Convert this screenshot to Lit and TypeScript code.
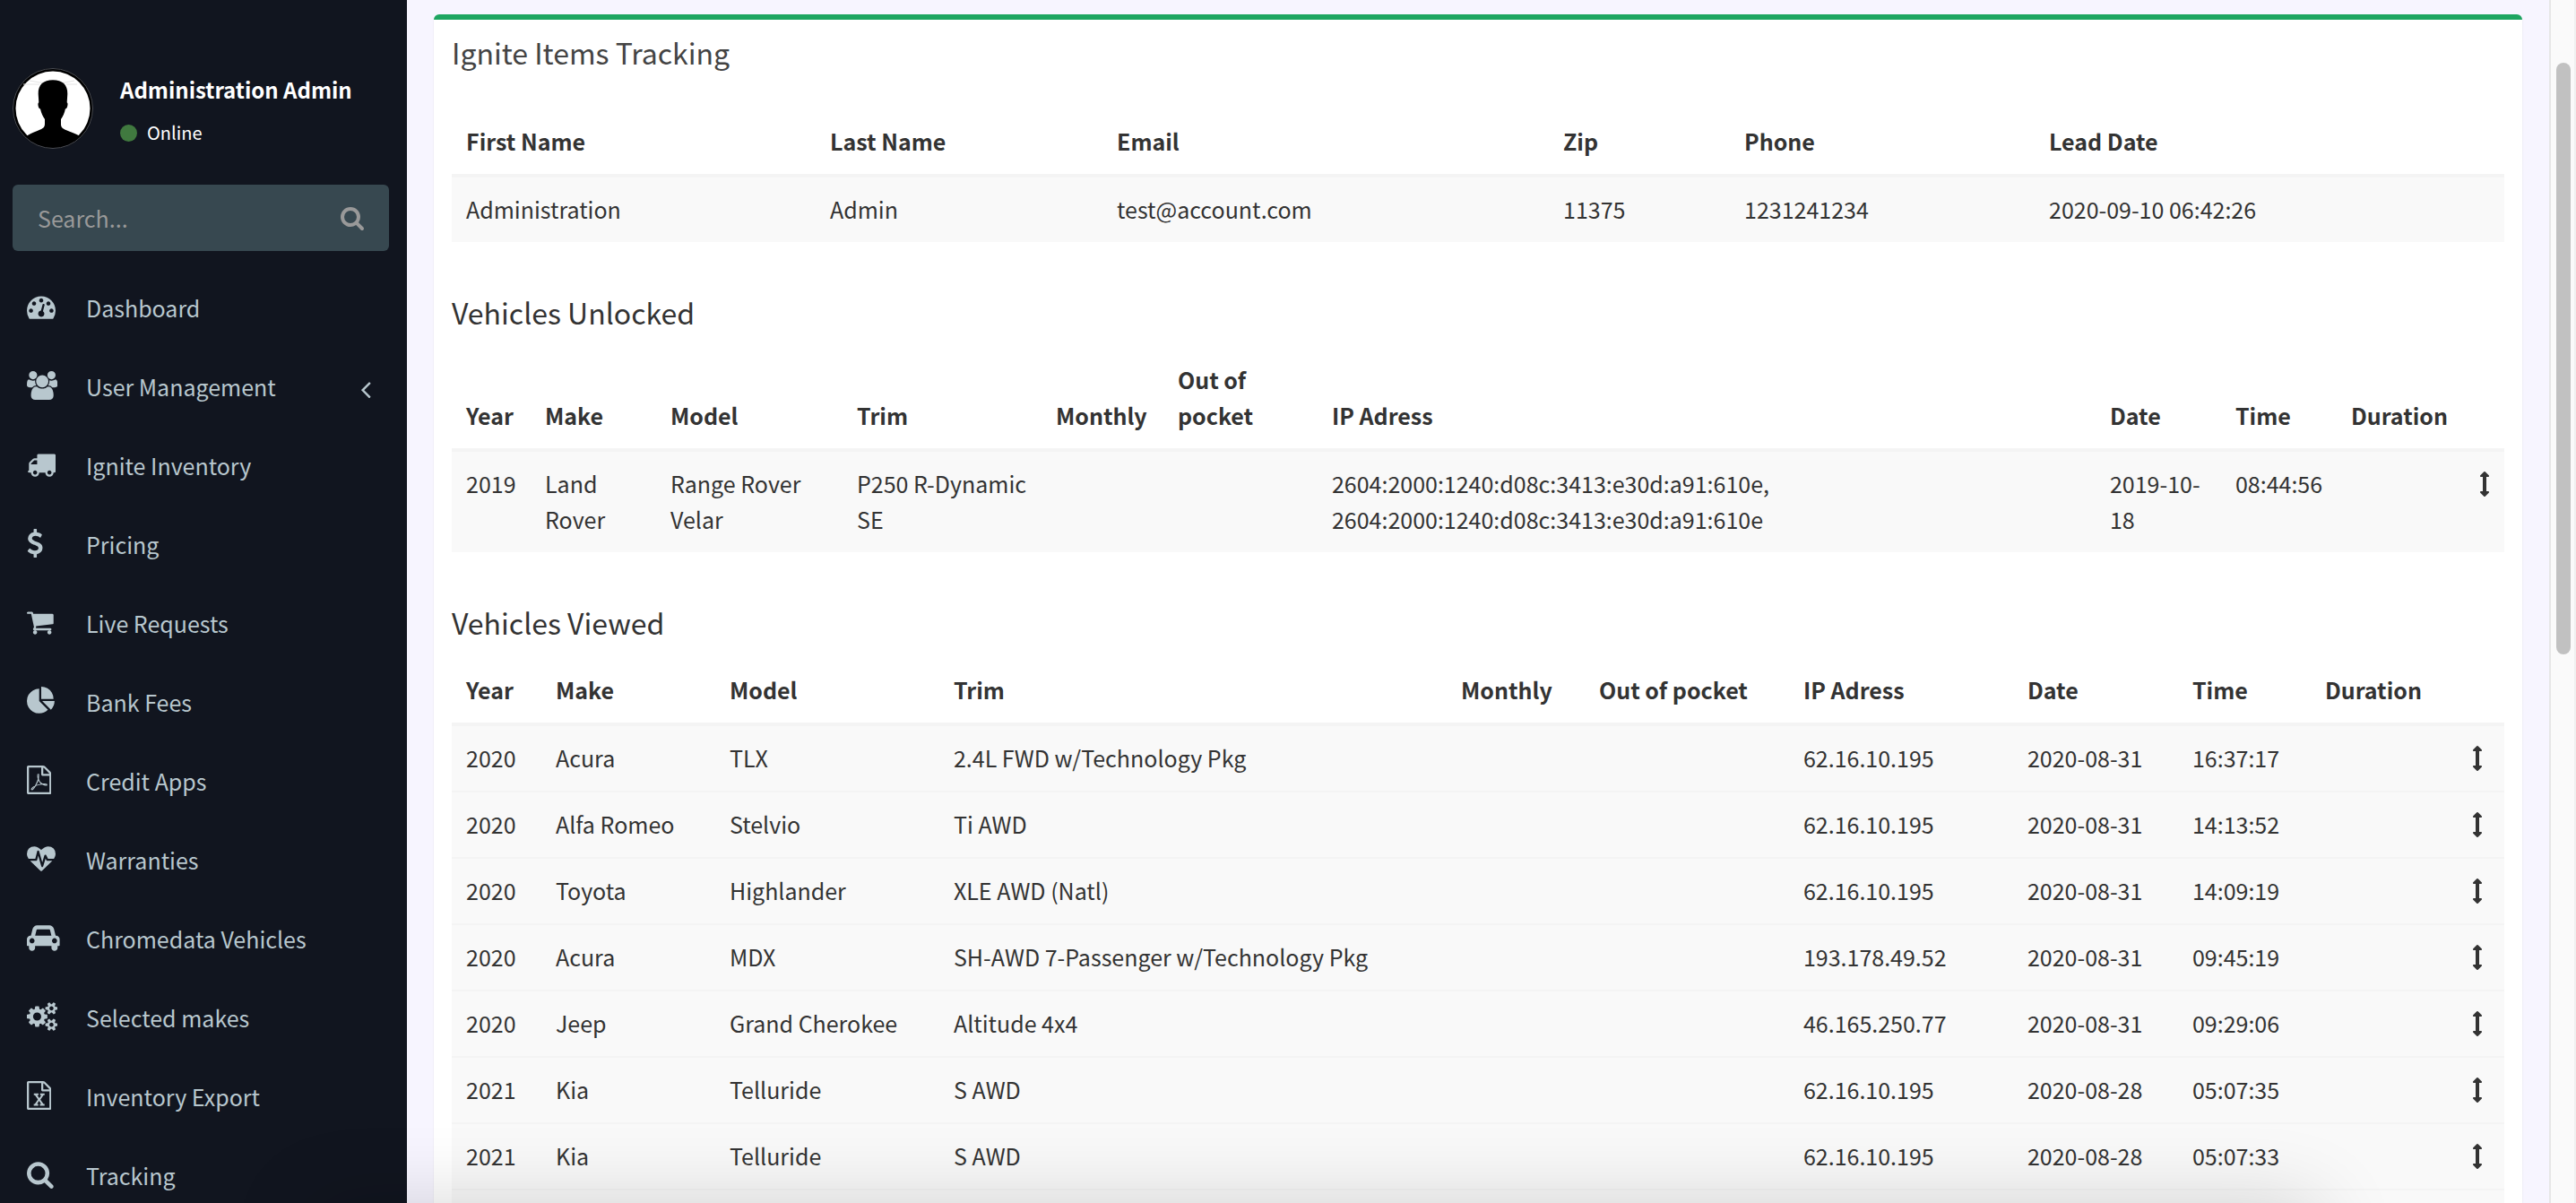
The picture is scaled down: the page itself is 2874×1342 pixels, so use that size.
import { LitElement, html, svg, css, nothing } from "lit";
import { customElement, property } from "lit/decorators.js";

/* Glyph outlines, drawn on a grid of 1792 units to the em. */
interface Glyph {
  box: string;
  d: string;
}

const FILE =
  "M1596 380q28 28 48 76t20 88v1152q0 40-28 68t-68 28h-1344q-40 0-68-28t-28-68v-1600q0-40 28-68t68-28h896q40 0 88 20t76 48zm-444-244v376h376q-10-29-22-41l-313-313q-12-12-41-22zm384 1528v-1024h-416q-40 0-68-28t-28-68v-416h-768v1536h1280z";

const SMALL_COG =
  "v140q0 16-149 31-12 27-30 52 51 113 51 138 0 4-4 7-122 71-124 71-8 0-46-47t-52-68q-20 2-30 2t-30-2q-14 21-52 68t-46 47q-2 0-124-71-4-3-4-7 0-25 51-138-18-25-30-52-149-15-149-31v-140q0-16 149-31 13-29 30-52-51-113-51-138 0-4 4-7 4-2 35-20t59-34 30-16q8 0 46 46.5t52 67.5q20-2 30-2t30 2q51-71 92-112l6-2q4 0 124 70 4 3 4 7 0 25-51 138 17 23 30 52 149 15 149 31z";

const GLYPHS: Record<string, Glyph> = {
  dashboard: {
    box: "0 0 1792 1792",
    d: "M384 1152q0-53-37.5-90.5t-90.5-37.5-90.5 37.5-37.5 90.5 37.5 90.5 90.5 37.5 90.5-37.5 37.5-90.5zm192-448q0-53-37.5-90.5t-90.5-37.5-90.5 37.5-37.5 90.5 37.5 90.5 90.5 37.5 90.5-37.5 37.5-90.5zm428 481l101-382q6-26-7.5-48.5t-38.5-29.5-48 6.5-30 39.5l-101 382q-60 5-107 43.5t-63 98.5q-20 77 20 146t117 89 146-20 89-117q16-60-6-117t-72-91zm660-33q0-53-37.5-90.5t-90.5-37.5-90.5 37.5-37.5 90.5 37.5 90.5 90.5 37.5 90.5-37.5 37.5-90.5zm-640-640q0-53-37.5-90.5t-90.5-37.5-90.5 37.5-37.5 90.5 37.5 90.5 90.5 37.5 90.5-37.5 37.5-90.5zm448 192q0-53-37.5-90.5t-90.5-37.5-90.5 37.5-37.5 90.5 37.5 90.5 90.5 37.5 90.5-37.5 37.5-90.5zm320 448q0 261-141 483-19 29-54 29h-1402q-35 0-54-29-141-221-141-483 0-182 71-348t191-286 286-191 348-71 348 71 286 191 191 286 71 348z",
  },
  users: {
    box: "64 0 1920 1792",
    d: "M657 896q-162 5-265 128h-134q-82 0-138-40.5t-56-118.5q0-353 124-353 6 0 43.5 21t97.5 42.5 119 21.5q67 0 133-23-5 37-5 66 0 139 81 256zm1071 637q0 120-73 189.5t-194 69.5h-874q-121 0-194-69.5t-73-189.5q0-53 3.5-103.5t14-109 26.5-108.5 43-97.5 62-81 85.5-53.5 111.5-20q10 0 43 21.5t73 48 107 48 135 21.5 135-21.5 107-48 73-48 43-21.5q61 0 111.5 20t85.5 53.5 62 81 43 97.5 26.5 108.5 14 109 3.5 103.5zm-1024-1277q0 106-75 181t-181 75-181-75-75-181 75-181 181-75 181 75 75 181zm704 384q0 159-112.5 271.5t-271.5 112.5-271.5-112.5-112.5-271.5 112.5-271.5 271.5-112.5 271.5 112.5 112.5 271.5zm576 225q0 78-56 118.5t-138 40.5h-134q-103-123-265-128 81-117 81-256 0-29-5-66 66 23 133 23 59 0 119-21.5t97.5-42.5 43.5-21q124 0 124 353zm-128-609q0 106-75 181t-181 75-181-75-75-181 75-181 181-75 181 75 75 181z",
  },
  truck: {
    box: "0 0 1792 1792",
    d: "M640 1408q0-52-38-90t-90-38-90 38-38 90 38 90 90 38 90-38 38-90zm-384-512h384v-256h-158q-13 0-22 9l-195 195q-9 9-9 22v30zm1280 512q0-52-38-90t-90-38-90 38-38 90 38 90 90 38 90-38 38-90zm256-1088v1024q0 15-4 26.5t-13.5 18.5-16.5 11.5-23.5 6-22.5 2-25.5 0-22.5-.5q0 106-75 181t-181 75-181-75-75-181h-384q0 106-75 181t-181 75-181-75-75-181h-64q-3 0-22.5.5t-25.5 0-22.5-2-23.5-6-16.5-11.5-13.5-18.5-4-26.5q0-26 19-45t45-19v-320q0-8-.5-35t0-38 2.5-34.5 6.5-37 14-30.5 22.5-30l198-198q19-19 50.5-32t58.5-13h160v-192q0-26 19-45t45-19h1024q26 0 45 19t19 45z",
  },
  dollar: {
    box: "384 0 1024 1792",
    d: "M1362 1185q0 153-99.5 263.5t-258.5 136.5v175q0 14-9 23t-23 9h-135q-13 0-22.5-9.5t-9.5-22.5v-175q-66-9-127.5-31t-101.5-44.5-74-48-46.5-37.5-17.5-18q-17-21-2-41l103-135q7-10 23-12 15-2 24 9l2 2q113 99 243 125 37 8 74 8 81 0 142.5-43t61.5-122q0-28-15-53t-33.5-42-58.5-37.5-66-32-80-32.5q-39-16-61.5-25t-61.5-26.5-62.5-31-56.5-35.5-53.5-42.5-43.5-49-35.5-58-21-66.5-8.5-78q0-138 98-242t255-134v-180q0-13 9.5-22.5t22.5-9.5h135q14 0 23 9t9 23v176q57 6 110.5 23t87 33.5 63.5 37.5 39 29 15 14q17 18 5 38l-81 146q-8 15-23 16-14 3-27-7-3-3-14.5-12t-39-26.5-58.5-32-74.5-26-85.5-11.5q-95 0-155 43t-60 111q0 26 8.5 48t29.5 41.5 39.5 33 56 31 60.5 27 70 27.5q53 20 81 31.5t76 35 75.5 42.5 62 50 53 63.5 31.5 76.5 13 94z",
  },
  cart: {
    box: "64 0 1664 1792",
    d: "M704 1536q0 52-38 90t-90 38-90-38-38-90 38-90 90-38 90 38 38 90zm896 0q0 52-38 90t-90 38-90-38-38-90 38-90 90-38 90 38 38 90zm128-1088v512q0 24-16.5 42.5t-40.5 21.5l-1044 122q13 60 13 70 0 16-24 64h920q26 0 45 19t19 45-19 45-45 19h-1024q-26 0-45-19t-19-45q0-11 8-31.5t16-36 21.5-40 15.5-29.5l-177-823h-204q-26 0-45-19t-19-45 19-45 45-19h256q16 0 28.5 6.5t19.5 15.5 13 24.5 8 26 5.5 29.5 4.5 26h1201q26 0 45 19t19 45z",
  },
  pie: {
    box: "0 0 1792 1792",
    d: "M768 890l546 546q-106 108-247.5 168t-298.5 60q-209 0-385.5-103t-279.5-279.5-103-385.5 103-385.5 279.5-279.5 385.5-103v762zm187 6h773q0 157-60 298.5t-168 247.5zm709-128h-768v-768q209 0 385.5 103t279.5 279.5 103 385.5z",
  },
  pdf: {
    box: "128 0 1536 1792",
    d:
      FILE +
      "m-514-593q33 26 84 56 59-7 117-7 147 0 177 49 16 22 2 52 0 1-1 2l-2 2v1q-6 38-71 38-48 0-115-20t-130-53q-221 24-392 83-153 262-242 262-15 0-28-7l-24-12q-1-1-6-5-10-10-6-36 9-40 56-91.5t132-96.5q14-9 23 6 2 2 2 4 52-85 107-197 68-136 104-262-24-82-30.5-159.5t6.5-127.5q11-40 42-40h22q23 0 35 15 18 21 9 68-2 6-4 8 1 3 1 8v30q-2 123-14 192 55 164 146 238zm-576 411q52-24 137-158-51 40-87.5 84t-49.5 74zm398-920q-15 42-2 132 1-7 7-44 0-3 7-43 1-4 4-8-1-1-1-2-1-2-1-3-1-22-13-36 0 1-1 2v2zm-124 661q135-54 284-81-2-1-13-9.5t-16-13.5q-76-67-127-176-27 86-83 197-30 56-45 83zm646-16q-24-24-140-24 76 28 124 28 14 0 18-1 0-1-2-3z",
  },
  heartbeat: {
    box: "0 0 1792 1792",
    d: "M1280 1024h305q-5 6-10 10.5t-9 7.5l-3 4-623 600q-18 18-44 18t-44-18l-624-602q-5-2-21-20h369q22 0 39.5-13.5t22.5-34.5l70-281 190 667q6 20 23 33t39 13q21 0 38-13t23-33l146-485 56 112q18 35 57 35zm512-428q0 145-103 300h-369l-111-221q-8-17-25.5-27t-36.5-8q-45 5-56 46l-129 430-196-686q-6-20-23.5-33t-39.5-13-39 13.5-22 34.5l-116 464h-423q-103-155-103-300 0-220 127-344t351-124q62 0 126.5 21.5t120 58 95.5 68.5 76 68q36-36 76-68t95.5-68.5 120-58 126.5-21.5q224 0 351 124t127 344z",
  },
  car: {
    box: "0 0 2048 1792",
    d: "M480 1088q0-66-47-113t-113-47-113 47-47 113 47 113 113 47 113-47 47-113zm36-320h1016l-89-357q-2-8-14-17.5t-21-9.5h-768q-9 0-21 9.5t-14 17.5zm1372 320q0-66-47-113t-113-47-113 47-47 113 47 113 113 47 113-47 47-113zm160-96v384q0 14-9 23t-23 9h-96v128q0 80-56 136t-136 56-136-56-56-136v-128h-1024v128q0 80-56 136t-136 56-136-56-56-136v-128h-96q-14 0-23-9t-9-23v-384q0-93 65.5-158.5t158.5-65.5h28l105-419q23-94 104-157.5t179-63.5h768q98 0 179 63.5t104 157.5l105 419h28q93 0 158.5 65.5t65.5 158.5z",
  },
  cogs: {
    box: "-64 0 1920 1792",
    d:
      "M832 896q0-106-75-181t-181-75-181 75-75 181 75 181 181 75 181-75 75-181zm768 512q0-52-38-90t-90-38-90 38-38 90q0 53 37.5 90.5t90.5 37.5 90.5-37.5 37.5-90.5zm0-1024q0-52-38-90t-90-38-90 38-38 90q0 53 37.5 90.5t90.5 37.5 90.5-37.5 37.5-90.5zm-384 421v185q0 10-7 19.5t-16 10.5l-155 24q-11 35-32 76 34 48 90 115 7 11 7 20 0 12-7 19-23 30-82.5 89.5t-78.5 59.5q-11 0-21-7l-115-90q-37 19-77 31-11 108-23 155-7 24-30 24h-186q-11 0-20-7.5t-10-17.5l-23-153q-34-10-75-31l-118 89q-7 7-20 7-11 0-21-8-144-133-144-160 0-9 7-19 10-14 41-53t47-61q-23-44-35-82l-152-24q-10-1-17-9.5t-7-19.5v-185q0-10 7-19.5t16-10.5l155-24q11-35 32-76-34-48-90-115-7-11-7-20 0-12 7-20 22-30 82-89t79-59q11 0 21 7l115 90q34-18 77-32 11-108 23-154 7-24 30-24h186q11 0 20 7.5t10 17.5l23 153q34 10 75 31l118-89q8-7 20-7 11 0 21 8 144 133 144 160 0 8-7 19-12 16-42 54t-45 60q23 48 34 82l152 23q10 2 17 10.5t7 19.5z" +
      "m640 533" + SMALL_COG + "m0-1024" + SMALL_COG,
  },
  excel: {
    box: "128 0 1536 1792",
    d:
      FILE +
      "m-979-234v106h281v-106h-75l103-161q5-7 10-16.5t7.5-13.5 3.5-4h2q1 4 5 10 2 4 4.5 7.5t6 8 6.5 8.5l107 161h-76v106h291v-106h-68l-192-273 195-282h67v-107h-279v107h74l-103 159q-4 7-10 16.5t-9 13.5l-2 3h-2q-1-4-5-10-6-11-17-23l-106-159h76v-107h-290v107h68l189 272-194 283h-68z",
  },
  search: {
    box: "64 0 1664 1792",
    d: "M1216 832q0-185-131.5-316.5t-316.5-131.5-316.5 131.5-131.5 316.5 131.5 316.5 316.5 131.5 316.5-131.5 131.5-316.5zm512 832q0 52-38 90t-90 38q-54 0-90-38l-343-342q-179 124-399 124-143 0-273.5-55.5t-225-150-150-225-55.5-273.5 55.5-273.5 150-225 225-150 273.5-55.5 273.5 55.5 225 150 150 225 55.5 273.5q0 220-124 399l343 343q37 37 37 90z",
  },
  angle: {
    box: "0 0 1792 1792",
    d: "M1203 544q0 13-10 23l-393 393 393 393q10 10 10 23t-10 23l-50 50q-10 10-23 10t-23-10l-466-466q-10-10-10-23t10-23l466-466q10-10 23-10t23 10l50 50q10 10 10 23z",
  },
  updown: {
    box: "512 0 768 1792",
    d: "M1216 320q0 26-19 45t-45 19h-128v1024h128q26 0 45 19t19 45-19 45l-256 256q-19 19-45 19t-45-19l-256-256q-19-19-19-45t19-45 45-19h128v-1024h-128q-26 0-45-19t-19-45 19-45l256-256q19-19 45-19t45 19l256 256q19 19 19 45z",
  },
};

@customElement("ui-icon")
export class UiIcon extends LitElement {
  @property() name = "search";

  static styles = css`
    :host {
      display: block;
      height: 32px;
    }
    .glyph {
      display: block;
      height: 100%;
      width: auto;
      fill: currentColor;
    }
  `;

  render() {
    const g = GLYPHS[this.name];
    return html`<svg class="glyph" viewBox=${g.box} aria-hidden="true">
      ${svg`<path d=${g.d}></path>`}
    </svg>`;
  }
}

interface MenuItem {
  icon: string;
  label: string;
  tree?: boolean;
}

const MENU: MenuItem[] = [
  { icon: "dashboard", label: "Dashboard" },
  { icon: "users", label: "User Management", tree: true },
  { icon: "truck", label: "Ignite Inventory" },
  { icon: "dollar", label: "Pricing" },
  { icon: "cart", label: "Live Requests" },
  { icon: "pie", label: "Bank Fees" },
  { icon: "pdf", label: "Credit Apps" },
  { icon: "heartbeat", label: "Warranties" },
  { icon: "car", label: "Chromedata Vehicles" },
  { icon: "cogs", label: "Selected makes" },
  { icon: "excel", label: "Inventory Export" },
  { icon: "search", label: "Tracking" },
];

@customElement("side-bar")
export class SideBar extends LitElement {
  static styles = css`
    :host {
      display: block;
      flex: none;
      width: 454px;
      box-sizing: border-box;
      background: #11151f;
      color: #b8c7ce;
    }
    .user {
      display: flex;
      gap: 30px;
      padding: 76px 14px 40px;
    }
    .avatar {
      display: block;
      width: 90px;
      height: 90px;
    }
    .name {
      margin: 4px 0 14px;
      font-size: 24px;
      line-height: 40px;
      font-weight: 600;
      color: #fff;
    }
    .status {
      display: flex;
      align-items: center;
      gap: 11px;
      font-size: 20px;
      line-height: 28px;
      color: #fff;
      text-decoration: none;
    }
    .dot {
      width: 19px;
      height: 19px;
      border-radius: 50%;
      background: #40793f;
    }
    .search {
      display: flex;
      align-items: center;
      height: 74px;
      margin: 0 20px 18px 14px;
      border-radius: 6px;
      background: #374850;
    }
    .field {
      flex: 1;
      min-width: 0;
      height: 100%;
      box-sizing: border-box;
      padding: 0 28px;
      border: 0;
      outline: 0;
      background: none;
      font: inherit;
      color: #fff;
    }
    .field::placeholder {
      color: #999;
      opacity: 1;
    }
    .go {
      padding: 0 28px;
      border: 0;
      background: none;
      color: #999;
    }
    .go ui-icon {
      height: 28px;
    }
    .menu {
      margin: 0;
      padding: 0;
      list-style: none;
    }
    .link {
      display: flex;
      align-items: center;
      height: 88px;
      box-sizing: border-box;
      padding: 0 30px;
      line-height: 40px;
      color: inherit;
      text-decoration: none;
    }
    .icon {
      flex: none;
      width: 66px;
    }
    .label {
      flex: 1;
      padding-top: 2px;
    }
    .angle {
      margin-top: 8px;
    }
  `;

  render() {
    return html`
      <div class="user">
        <svg class="avatar" viewBox="0 0 90 90" role="img" aria-label="Administration Admin">
          <circle cx="45" cy="45" r="45" fill="#000" />
          <circle cx="45" cy="45" r="44.5" fill="none" stroke="#4a4d55" />
          <circle cx="45" cy="45" r="41.5" fill="#fff" />
          <path d="M19 14q26 6 50 0M12 18h18m30 0h12" fill="none" stroke="#e4e4e4" />
          <path
            d="M45 13.300c10.500 0 16.500 5 16.300 15.500l-.6 9.500c1.300.6.9 3.400.2 5.200-.4 1.200-1.200 2-2 2-.9 4.600-2.600 8.500-4.900 11.500v5.500c0 3.600 2 5 5.500 6.500 6 2.500 10.500 4 15 6.500C67 82 57 87.500 45 87.500S23 82 16 75.500c4.500-3 9.500-4.500 15-7 3.500-1.500 5-3 5-6.500V57c-2.300-3-4-7-5-11.500-.8 0-1.600-.8-2-2-.6-1.800-1-4.600.3-5.200l-.6-9.500C28.500 18.300 34.500 13.300 45 13.300z"
            fill="#000"
          />
        </svg>
        <div>
          <p class="name">Administration Admin</p>
          <a class="status" href="#"><span class="dot"></span>Online</a>
        </div>
      </div>
      <form class="search">
        <input class="field" type="text" placeholder="Search..." aria-label="Search" />
        <button class="go" type="button" aria-label="Search"><ui-icon name="search"></ui-icon></button>
      </form>
      <ul class="menu">
        ${MENU.map(
          (m) => html`<li>
            <a class="link" href="#">
              <ui-icon class="icon" name=${m.icon}></ui-icon>
              <span class="label">${m.label}</span>
              ${m.tree ? html`<ui-icon class="angle" name="angle"></ui-icon>` : nothing}
            </a>
          </li>`
        )}
      </ul>
    `;
  }
}

interface Column {
  label: string;
  weight: number;
}

const MOVE = "\u2195";

@customElement("data-table")
export class DataTable extends LitElement {
  @property({ attribute: false }) columns: Column[] = [];
  @property({ attribute: false }) rows: string[][] = [];

  static styles = css`
    :host {
      display: block;
    }
    .table {
      width: 100%;
      table-layout: fixed;
      border-collapse: separate;
      border-spacing: 0;
    }
    .head,
    .cell {
      padding: 15px 16px 17px;
      line-height: 40px;
      text-align: left;
    }
    .head {
      vertical-align: bottom;
      font-weight: 700;
      border-bottom: 4px solid #f4f4f4;
    }
    .cell {
      height: 40px;
      vertical-align: top;
      background: #f9f9f9;
      border-top: 2px solid #f4f4f4;
    }
    .row:first-child .cell {
      border-top: 0;
    }
    .move {
      height: 28px;
      margin-top: 7px;
    }
  `;

  render() {
    const total = this.columns.reduce((sum, c) => sum + c.weight, 0);
    return html`<table class="table">
      <colgroup>
        ${this.columns.map((c) => html`<col style="width:${(c.weight / total) * 100}%" />`)}
      </colgroup>
      <thead>
        <tr>
          ${this.columns.map((c) => html`<th class="head" scope="col">${c.label}</th>`)}
        </tr>
      </thead>
      <tbody>
        ${this.rows.map(
          (r) => html`<tr class="row">
            ${this.columns.map(
              (_, i) => html`<td class="cell">${r[i] === MOVE ? html`<ui-icon class="move" name="updown"></ui-icon>` : r[i] ?? ""}</td>`
            )}
          </tr>`
        )}
      </tbody>
    </table>`;
  }
}

const cols = (...pairs: [string, number][]): Column[] => pairs.map(([label, weight]) => ({ label, weight }));

const LEAD_COLS = cols(["First Name", 406], ["Last Name", 320], ["Email", 498], ["Zip", 202], ["Phone", 340], ["Lead Date", 524]);
const LEAD_ROWS = [["Administration", "Admin", "test@account.com", "11375", "1231241234", "2020-09-10 06:42:26"]];

const UNLOCKED_COLS = cols(
  ["Year", 88], ["Make", 140], ["Model", 208], ["Trim", 222], ["Monthly", 136], ["Out of pocket", 172],
  ["IP Adress", 868], ["Date", 140], ["Time", 129], ["Duration", 143], ["", 44]
);
const UNLOCKED_ROWS = [
  ["2019", "Land Rover", "Range Rover Velar", "P250 R-Dynamic SE", "", "",
    "2604:2000:1240:d08c:3413:e30d:a91:610e, 2604:2000:1240:d08c:3413:e30d:a91:610e", "2019-10-18", "08:44:56", "", MOVE],
];

const VIEWED_COLS = cols(
  ["Year", 100], ["Make", 194], ["Model", 250], ["Trim", 566], ["Monthly", 154], ["Out of pocket", 228],
  ["IP Adress", 250], ["Date", 184], ["Time", 148], ["Duration", 164], ["", 52]
);
const viewed = (year: string, make: string, model: string, trim: string, ip: string, date: string, time: string) =>
  [year, make, model, trim, "", "", ip, date, time, "", MOVE];
const VIEWED_ROWS = [
  viewed("2020", "Acura", "TLX", "2.4L FWD w/Technology Pkg", "62.16.10.195", "2020-08-31", "16:37:17"),
  viewed("2020", "Alfa Romeo", "Stelvio", "Ti AWD", "62.16.10.195", "2020-08-31", "14:13:52"),
  viewed("2020", "Toyota", "Highlander", "XLE AWD (Natl)", "62.16.10.195", "2020-08-31", "14:09:19"),
  viewed("2020", "Acura", "MDX", "SH-AWD 7-Passenger w/Technology Pkg", "193.178.49.52", "2020-08-31", "09:45:19"),
  viewed("2020", "Jeep", "Grand Cherokee", "Altitude 4x4", "46.165.250.77", "2020-08-31", "09:29:06"),
  viewed("2021", "Kia", "Telluride", "S AWD", "62.16.10.195", "2020-08-28", "05:07:35"),
  viewed("2021", "Kia", "Telluride", "S AWD", "62.16.10.195", "2020-08-28", "05:07:33"),
  [],
];

@customElement("app-root")
export class AppRoot extends LitElement {
  static styles = css`
    :host {
      display: block;
      position: relative;
      height: 100vh;
      overflow: hidden;
      font-family: "Noto Sans CJK SC", "Noto Sans", sans-serif;
      font-size: 25px;
      line-height: 40px;
      color: #333;
    }
    .page {
      display: flex;
      align-items: stretch;
      min-height: 100%;
    }
    .content {
      flex: 1;
      min-width: 0;
      padding: 16px 30px 0;
      background: #f7f5ff;
    }
    .box {
      padding: 16px 20px 0;
      border-top: 6px solid #1ea561;
      border-radius: 6px 6px 0 0;
      background: #fff;
      box-shadow: 0 2px 2px rgba(0, 0, 0, 0.1);
    }
    .title,
    .section {
      margin: 0;
      font-size: 32px;
      line-height: 40px;
      font-weight: 400;
    }
    .title {
      padding-bottom: 44px;
      color: #444;
    }
    .section {
      padding: 58px 0 20px;
    }
    .track {
      flex: none;
      padding: 70px 4px 0 6px;
      border-left: 2px solid #e7e7e7;
      border-right: 2px solid #f0f0f0;
      background: #fafafa;
    }
    .thumb {
      width: 16px;
      height: 660px;
      border-radius: 8px;
      background: #c1c1c1;
    }
    /* Shade cast along the bottom edge of the view */
    .shade {
      position: absolute;
      top: 100%;
      left: 12%;
      right: 10%;
      height: 200px;
      box-shadow: 0 0 90px rgba(0, 0, 0, 0.16);
      pointer-events: none;
    }
  `;

  render() {
    return html`
      <div class="page">
        <side-bar></side-bar>
        <main class="content">
          <section class="box">
            <h3 class="title">Ignite Items Tracking</h3>
            <data-table .columns=${LEAD_COLS} .rows=${LEAD_ROWS}></data-table>
            <h4 class="section">Vehicles Unlocked</h4>
            <data-table .columns=${UNLOCKED_COLS} .rows=${UNLOCKED_ROWS}></data-table>
            <h4 class="section">Vehicles Viewed</h4>
            <data-table .columns=${VIEWED_COLS} .rows=${VIEWED_ROWS}></data-table>
          </section>
        </main>
        <div class="track"><div class="thumb"></div></div>
      </div>
      <div class="shade"></div>
    `;
  }
}
